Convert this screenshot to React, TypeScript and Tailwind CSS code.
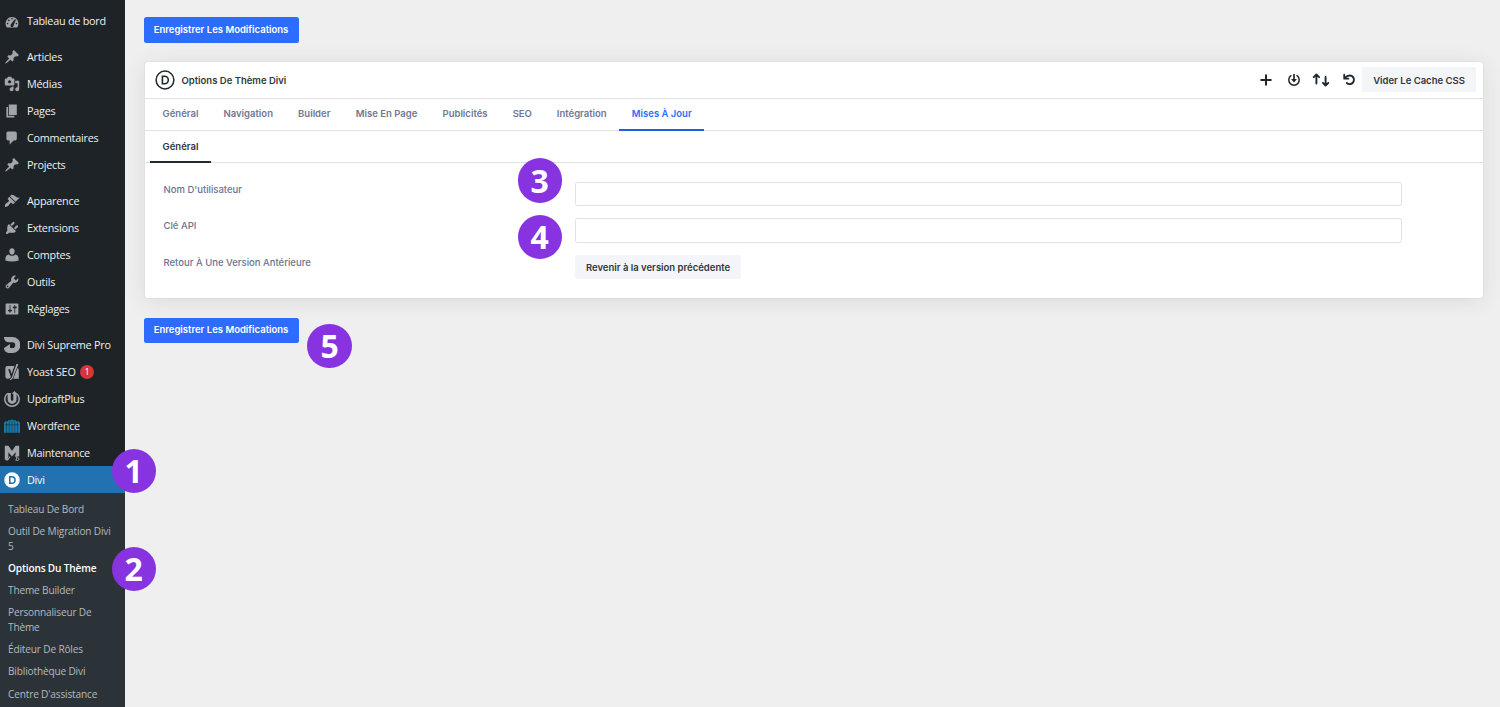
import React from "react";

const PIN =
  "M10.44 3.02l1.82-1.82 6.36 6.35-1.83 1.82c-1.05-.68-2.48-.57-3.41.36l-.75.75c-.92.93-1.04 2.35-.35 3.41l-1.83 1.82-2.41-2.41-2.8 2.79c-.42.42-3.38 2.71-3.8 2.29s1.86-3.39 2.28-3.81l2.79-2.79L4.1 9.36l1.83-1.82c1.05.69 2.48.57 3.4-.36l.75-.75c.93-.92 1.05-2.35.36-3.41z";
const MEDIA =
  "M13 11V4c0-.55-.45-1-1-1h-1.67L9 1H5L3.67 3H2c-.55 0-1 .45-1 1v7c0 .55.45 1 1 1h10c.55 0 1-.45 1-1zM7 5.200c1 0 2 .9 2 2s-.9 2-2 2-2-.9-2-2 .9-2 2-2zM14 6h5v10.5c0 1.38-1.12 2.5-2.5 2.5S14 17.88 14 16.5s1.12-2.5 2.5-2.5c.17 0 .34.02.5.05V9h-3V6zm-4 8.05V13h2v3.5c0 1.38-1.12 2.5-2.5 2.5S7 17.88 7 16.5 8.12 14 9.5 14c.17 0 .34.02.5.05z";
const PAGE = "M6 15V2h10v13H6zm-1 1h8v2H3V5h2v11z";
const COMMENT =
  "M5 2h9c1.1 0 2 .9 2 2v7c0 1.1-.9 2-2 2h-2l-5 5v-5H5c-1.1 0-2-.9-2-2V4c0-1.1.9-2 2-2z";
const BRUSH =
  "M14.48 11.06L7.41 3.99l1.5-1.5c.5-.56 2.3-.47 3.51.32 1.21.8 1.43 1.28 2.91 2.1 1.18.64 2.45 1.26 4.45.85zm-.71.71L6.7 4.7 4.93 6.47c-.39.39-.39 1.02 0 1.41l1.06 1.06c.39.39.39 1.03 0 1.42-.6.6-1.43 1.11-2.21 1.69-.35.26-.7.53-1.01.84C1.43 14.23.4 16.08 1.4 17.07c.99 1 2.84-.03 4.18-1.36.31-.31.58-.66.85-1.02.57-.78 1.08-1.61 1.69-2.21.39-.39 1.02-.39 1.41 0l1.06 1.06c.39.39 1.02.39 1.41 0z";
const PLUG =
  "M13.11 4.36L9.87 7.6 8 5.73l3.24-3.24c.35-.34 1.05-.2 1.56.32.52.51.66 1.21.31 1.55zm-8 1.77l.91-1.12 9.01 9.01-1.19.84c-.71.71-2.63 1.16-3.82 1.16H6.14L4.9 17.26c-.59.59-1.54.59-2.12 0-.59-.58-.59-1.53 0-2.12l1.24-1.24v-3.88c0-1.13.4-3.19 1.09-3.89zm7.26 3.97l3.24-3.24c.34-.35 1.04-.21 1.55.31.52.51.66 1.21.31 1.55l-3.24 3.25z";
const USER =
  "M10 1.500c2.300 0 3.600 1.800 3.300 4.200-.2 2.400-1.400 4-3.300 4S6.900 8.100 6.700 5.700C6.400 3.300 7.700 1.500 10 1.500zM6 9.300c1.200 1.300 2.500 1.700 4 1.700s2.800-.4 4-1.700c2.500.3 4.200 2.600 4.200 5V17c-2.400.8-5.200 1.200-8.200 1.200S4.200 17.800 1.800 17v-2.700c0-2.400 1.700-4.700 4.200-5z";
const WRENCH =
  "M16.68 9.77c-1.34 1.34-3.3 1.67-4.95.99l-5.41 6.52c-.99.99-2.59.99-3.58 0s-.99-2.59 0-3.57l6.52-5.42c-.68-1.65-.35-3.61.99-4.95 1.28-1.28 3.12-1.62 4.72-1.06l-2.89 2.89 2.82 2.82 2.86-2.87c.53 1.58.18 3.39-1.08 4.65zM3.81 16.21c.4.39 1.04.39 1.43 0 .4-.4.4-1.04 0-1.43-.39-.4-1.03-.4-1.43 0-.39.39-.39 1.03 0 1.43z";
const SETTINGS =
  "M18 16V4c0-.55-.45-1-1-1H3c-.55 0-1 .45-1 1v12c0 .55.45 1 1 1h14c.55 0 1-.45 1-1zM8 11h1c.55 0 1 .45 1 1s-.45 1-1 1H8v1.5c0 .28-.22.5-.5.5s-.5-.22-.5-.5V13H6c-.55 0-1-.45-1-1s.45-1 1-1h1V5.5c0-.28.22-.5.5-.5s.5.22.5.5V11zm5-2h-1c-.55 0-1-.45-1-1s.45-1 1-1h1V5.5c0-.28.22-.5.5-.5s.5.22.5.5V7h1c.55 0 1 .45 1 1s-.45 1-1 1h-1v5.5c0 .28-.22.5-.5.5s-.5-.22-.5-.5V9z";

function Svg({ children }: { children: React.ReactNode }) {
  return (
    <svg viewBox="0 0 20 20" className="mt-px h-4 w-4 shrink-0" fill="#a2a6aa" fillRule="evenodd">
      {children}
    </svg>
  );
}

const glyph = (d: string) => (
  <Svg>
    <path d={d} />
  </Svg>
);

const dashboardIcon = (
  <Svg>
    <path d="M3.76 17h12.48c1.1-1.41 1.76-3.18 1.76-5.1 0-4.53-3.58-8.2-8-8.2s-8 3.67-8 8.2c0 1.92.66 3.69 1.76 5.1z" />
    <g fill="#1d2327">
      <circle cx="10" cy="6" r="1" />
      <circle cx="6" cy="8" r="1" />
      <circle cx="4.500" cy="12" r="1" />
      <circle cx="15.500" cy="12" r="1" />
      <path d="M13.700 6.300l1.100.800-2.700 7.100a2 2 0 1 1-3.400-1.300z" />
    </g>
  </Svg>
);

const supremeIcon = (
  <Svg>
    <path d="M0 0h10.500a9.800 9.800 0 0 1 0 20H6a6 6 0 0 1-6-6v-.3L7.500 8.800v4.900h3a3.500 3.500 0 0 0 0-7H6A6 6 0 0 1 0 .7z" />
  </Svg>
);

const yoastIcon = (
  <Svg>
    <path d="M4.500 2.500H13L9.500 12.500 7.600 6.500H5.200l3.400 9.500c-.3.900-.9 1.500-2 1.700v.800H4.500A2.800 2.800 0 0 1 1.700 15.700V5.300A2.800 2.800 0 0 1 4.500 2.500z" />
    <path d="M15.500 0h2.500L11 17.800c-.8 1.500-1.800 2.200-3.500 2.200v-1.500c1.500 0 2-.8 2.500-2.300z" />
    <path d="M16.900 5c1 .5 1.500 1.300 1.500 2.400v11.100h-6.800z" />
  </Svg>
);

const updraftIcon = (
  <Svg>
    <path d="M4.700 2.800a9 9 0 1 0 10.600 0" fill="none" stroke="#a2a6aa" strokeWidth="1.900" />
    <path d="M4.500 2.500h4v8a1.600 1.600 0 0 0 3.200 0V3.500H9.500L13.200 0l3 3.500h-.5v7a5.600 5.600 0 0 1-11.200 0z" />
  </Svg>
);

const wordfenceIcon = (
  <Svg>
    <path
      fill="#1879a8"
      d="M0 5.500l2-1.500L4 4.500l2-2L8 3l2-1.500L12 3l2-.5 2 2 2-.5 2 1.500v13H0z"
    />
    <path
      d="M3.200 5.500v13M6.600 4v14.500M10 3.500v15M13.400 4v14.500M16.800 5.500v13M1 8.500h18"
      stroke="#1d2b35"
      strokeWidth="0.7"
    />
  </Svg>
);

const maintenanceIcon = (
  <Svg>
    <path d="M1 1h4.500L10 7.500 14.500 1H19v13.500h-4.500V9L10 14.500 5.500 9v6L3 18.500H1z" />
    <path d="M14 13l2.200 3M5 18l2.500-3.500" fill="none" stroke="#a2a6aa" strokeWidth="1.300" />
    <circle cx="17" cy="17.700" r="1.700" fill="#1d2327" stroke="#a2a6aa" strokeWidth="1.200" />
    <circle cx="4" cy="18" r="1.500" />
    <path d="M14 19h2" stroke="#a2a6aa" />
  </Svg>
);

const diviIcon = (
  <Svg>
    <circle cx="10" cy="10" r="9.700" fill="#fff" />
    <path
      d="M7.200 5.800h2.400a4.200 4.200 0 0 1 0 8.400H7.200z"
      fill="none"
      stroke="#2271b1"
      strokeWidth="1.900"
    />
  </Svg>
);

type Item = { label: string; icon: React.ReactNode; badge?: string; active?: boolean };

const groups: Item[][] = [
  [{ label: "Tableau de bord", icon: dashboardIcon }],
  [
    { label: "Articles", icon: glyph(PIN) },
    { label: "Médias", icon: glyph(MEDIA) },
    { label: "Pages", icon: glyph(PAGE) },
    { label: "Commentaires", icon: glyph(COMMENT) },
    { label: "Projects", icon: glyph(PIN) },
  ],
  [
    { label: "Apparence", icon: glyph(BRUSH) },
    { label: "Extensions", icon: glyph(PLUG) },
    { label: "Comptes", icon: glyph(USER) },
    { label: "Outils", icon: glyph(WRENCH) },
    { label: "Réglages", icon: glyph(SETTINGS) },
  ],
  [
    { label: "Divi Supreme Pro", icon: supremeIcon },
    { label: "Yoast SEO", icon: yoastIcon, badge: "1" },
    { label: "UpdraftPlus", icon: updraftIcon },
    { label: "Wordfence", icon: wordfenceIcon },
    { label: "Maintenance", icon: maintenanceIcon },
    { label: "Divi", icon: diviIcon, active: true },
  ],
];

const submenu = [
  { lines: ["Tableau De Bord"] },
  { lines: ["Outil De Migration Divi", "5"] },
  { lines: ["Options Du Thème"], current: true },
  { lines: ["Theme Builder"] },
  { lines: ["Personnaliseur De", "Thème"] },
  { lines: ["Éditeur De Rôles"] },
  { lines: ["Bibliothèque Divi"] },
  { lines: ["Centre D'assistance"] },
];

function Sidebar() {
  return (
    <nav className="flex h-full w-[125px] shrink-0 flex-col bg-[#1d2327] pt-[7.500px] font-['Open_Sans','Noto_Sans',sans-serif]">
      <div className="flex flex-col gap-[8.500px]">
        {groups.map((g, i) => (
          <ul key={i}>
            {g.map((it) => (
              <li
                key={it.label}
                className={
                  "flex h-[27.070px] items-center pl-[4.400px] text-[10.800px] tracking-[-0.230px] whitespace-nowrap " +
                  (it.active ? "bg-[#2271b1] text-white" : "text-[#f0f0f1]")
                }
              >
                {it.icon}
                <span className="ml-[6.600px] pt-[1.100px]">{it.label}</span>
                {it.badge && (
                  <span className="mt-px ml-[4.500px] flex h-[14px] w-[14px] items-center justify-center rounded-full bg-[#d63638] text-[9px] text-white">
                    {it.badge}
                  </span>
                )}
              </li>
            ))}
          </ul>
        ))}
      </div>
      <ul className="flex flex-1 flex-col gap-[7.600px] bg-[#2c3338] pt-[9px] pl-2 text-[10.100px] leading-[14.600px] tracking-[-0.160px] whitespace-nowrap text-[#b4b9be]">
        {submenu.map((s) => (
          <li key={s.lines[0]} className={s.current ? "font-semibold text-white" : ""}>
            {s.lines.map((l) => (
              <div key={l}>{l}</div>
            ))}
          </li>
        ))}
      </ul>
    </nav>
  );
}

function SaveButton() {
  return (
    <button className="flex h-[25.500px] w-[155px] items-center justify-center rounded-[2.500px] bg-[#2e6bff] text-[9.500px] font-semibold whitespace-nowrap text-white">
      Enregistrer Les Modifications
    </button>
  );
}

const tabs = [
  { label: "Général", w: "w-[61px]" },
  { label: "Navigation", w: "w-[74.500px]" },
  { label: "Builder", w: "w-[57.500px]" },
  { label: "Mise En Page", w: "w-[87px]" },
  { label: "Publicités", w: "w-[70px]" },
  { label: "SEO", w: "w-[44.500px]" },
  { label: "Intégration", w: "w-[74.500px]" },
  { label: "Mises À Jour", w: "w-[85.500px]", active: true },
];

function HeaderIcons() {
  return (
    <div className="mr-[5px] flex items-center gap-[11.500px]">
      <svg viewBox="0 0 16 16" className="h-4 w-4" stroke="#20292f" strokeWidth="2" strokeLinecap="round">
        <path d="M8 3.200v9.600M3.200 8h9.600" />
      </svg>
      <svg viewBox="0 0 16 16" className="h-4 w-4" fill="none" stroke="#20292f" strokeWidth="1.500">
        <path d="M5 3.700a5.200 5.200 0 1 0 6 0" strokeLinecap="round" />
        <path d="M8 2v5.500" strokeWidth="1.700" />
        <path d="M5 7h6l-3 3.500z" fill="#20292f" stroke="none" />
      </svg>
      <svg viewBox="0 0 18 16" className="-mx-px h-4 w-[18px]" fill="none" stroke="#20292f" strokeWidth="1.900" strokeLinecap="round" strokeLinejoin="round">
        <path d="M4.400 11.500V3M1.700 5.200l2.700-2.700 2.700 2.700" />
        <path d="M13.600 5v8M10.900 10.800l2.700 2.700 2.700-2.700" />
      </svg>
      <svg viewBox="0 0 16 16" className="h-4 w-4" fill="none" stroke="#20292f" strokeLinecap="round" strokeLinejoin="round">
        <path d="M4 5.800C5.300 4.200 6.800 3.500 8.700 3.500a4.300 4.300 0 1 1-2.900 7.500" strokeWidth="1.900" />
        <path d="M3.200 2.600v4.100h4.200" strokeWidth="1.800" />
      </svg>
    </div>
  );
}

function Panel() {
  return (
    <section className="ml-px flex h-[236px] w-[1338.500px] flex-col rounded-[2.500px] bg-white shadow-[0_3px_22px_rgba(40,50,60,0.10),0_0_1px_rgba(40,50,60,0.3)]">
      <header className="flex h-[36.500px] items-center border-b border-[#dfe2e5] pr-[7.500px] pl-[10px]">
        <svg viewBox="0 0 20 20" className="mt-px h-5 w-5" fill="none" stroke="#20292f">
          <circle cx="10" cy="10" r="8.900" strokeWidth="1.500" />
          <path d="M7.400 6.300h2.200a3.700 3.700 0 0 1 0 7.400H7.400z" strokeWidth="1.600" />
        </svg>
        <h1 className="ml-[7px] pt-[2px] text-[9.500px] font-semibold text-[#32373c]">Options De Thème Divi</h1>
        <div className="ml-auto flex items-center">
          <HeaderIcons />
          <button className="flex h-[25px] w-[114px] items-center justify-center rounded-[2.500px] bg-[#f3f5f8] pt-[2px] pl-px text-[9.500px] font-semibold whitespace-nowrap text-[#32373c]">
            Vider Le Cache CSS
          </button>
        </div>
      </header>
      <div className="flex h-[32.250px] border-b border-[#dfe2e5] pl-[5px]">
        {tabs.map((t) => (
          <button
            key={t.label}
            className={
              "-mb-px flex items-center justify-center border-b-2 pl-px text-[9.500px] font-semibold whitespace-nowrap " +
              t.w +
              (t.active
                ? " border-[#1f5ee0] text-[#2e6bff]"
                : " border-transparent text-[#6f7796]")
            }
          >
            {t.label}
          </button>
        ))}
      </div>
      <div className="flex h-[32.250px] border-b border-[#dfe2e5] pl-[5px]">
        <button className="-mb-px flex w-[61px] items-center justify-center border-b-2 border-[#20292f] pt-[2px] pl-px text-[9.500px] font-semibold text-[#32373c]">
          Général
        </button>
      </div>
      <div className="grid grid-cols-[412px_827px] gap-y-3 pt-[18.500px] pl-[18.500px] text-[9.500px] font-medium text-[#6b7390]">
        <label className="pl-[0.500px] leading-[15px]">Nom D'utilisateur</label>
        <input className="h-[24.500px] rounded-[2.500px] border border-[#dfe1e4] bg-white" />
        <label className="pl-[0.500px] leading-[15px]">Clé API</label>
        <input className="h-[24.500px] rounded-[2.500px] border border-[#dfe1e4] bg-white" />
        <label className="pl-[0.500px] leading-[15px]">Retour À Une Version Antérieure</label>
        <button className="flex h-[24.500px] w-[166px] items-center justify-center rounded-[2.500px] bg-[#f3f5f8] pt-[2px] font-semibold whitespace-nowrap text-[#32373c]">
          Revenir à la version précédente
        </button>
      </div>
    </section>
  );
}

const markers = [
  { n: "1", pos: "left-[111.500px] top-[448.500px]" },
  { n: "2", pos: "left-[111.500px] top-[546.500px]" },
  { n: "3", pos: "left-[517.500px] top-[158.300px]" },
  { n: "4", pos: "left-[517.500px] top-[214.700px]" },
  { n: "5", pos: "left-[307.300px] top-[323.500px]" },
];

export default function App() {
  return (
    <div className="relative flex h-[707px] w-[1500px] overflow-hidden bg-[#efefef] font-['Inter',sans-serif]">
      <Sidebar />
      <main className="flex flex-1 flex-col pt-[17px] pl-[18.500px]">
        <SaveButton />
        <div className="pt-[19.500px] pb-[19.500px]">
          <Panel />
        </div>
        <SaveButton />
      </main>
      {markers.map((m) => (
        <div
          key={m.n}
          className={
            "absolute flex h-[44.500px] w-[44.500px] items-center justify-center rounded-full bg-[#8733e0] font-['Open_Sans',sans-serif] text-[32px] leading-none font-bold text-white " +
            m.pos
          }
        >
          {m.n}
        </div>
      ))}
    </div>
  );
}
